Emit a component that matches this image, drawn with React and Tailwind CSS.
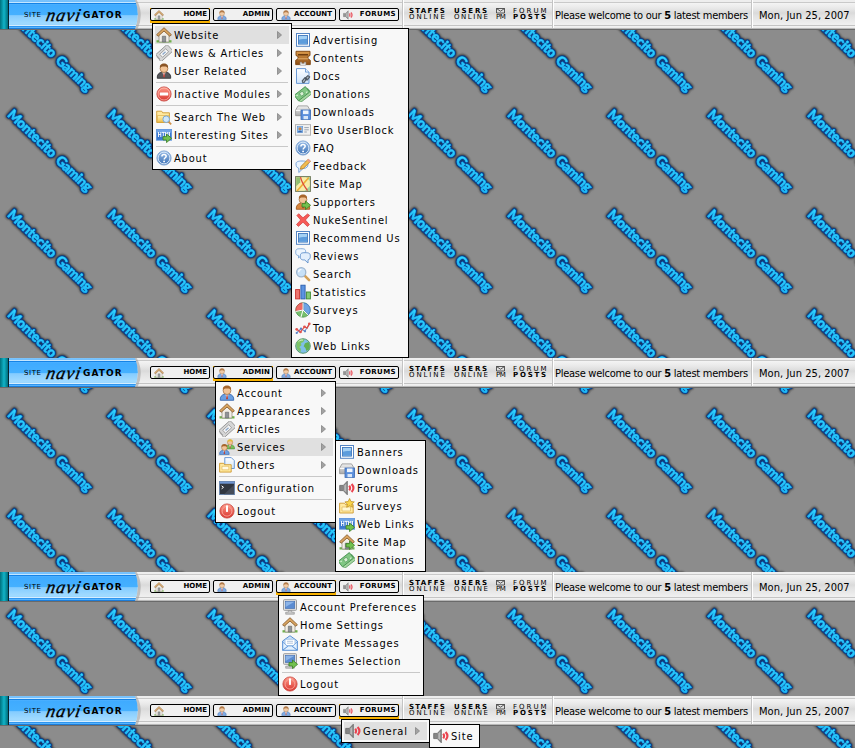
import React from "react";

const svgProps = { viewBox: "0 0 16 16", width: 16, height: 16 };

/* Gradients shared by every icon on the page */
function SharedDefs() {
  const stops = [
    ["gRed", "#ff9d8c", "#d8322c"],
    ["gYellow", "#fff3b8", "#f3c24c"],
    ["gGrey", "#f1f1f1", "#a9a9a9"],
    ["gHelp", "#9cc0ea", "#3a6fb4"],
    ["gPaper", "#ffffff", "#cfe3fa"],
    ["gBrown", "#dc9c4c", "#8c4d14"],
    ["gText", "#3fe2ff", "#14b0fa"],
  ];
  return (
    <svg width="0" height="0" className="absolute">
      <defs>
        {stops.map(([id, a, b]) => (
          <linearGradient key={id} id={id} x1="0" y1="0" x2="0" y2="1">
            <stop offset="0" stopColor={a} />
            <stop offset="1" stopColor={b} />
          </linearGradient>
        ))}
      </defs>
    </svg>
  );
}

const GoArrow = () => (
  <path d="M7 9.600h3.500V7l5.100 4.300-5.100 4.300v-2.600H7z" fill="#72c14e" stroke="#3b7d22" strokeWidth=".8" />
);
const Monitor = () => (
  <>
    <rect x="1.5" y=".7" width="13" height="10.6" rx=".8" fill="#e4e4e4" stroke="#9a9a9a" />
    <rect x="3.3" y="2.4" width="9.4" height="7" fill="#5b8cd2" stroke="#456fae" strokeWidth=".7" />
    <path d="M3.6 2.7h8.8L3.6 8z" fill="#8cb4e8" />
    <path d="M6.3 11.5h3.4v1.7h2.6v2H3.7v-2h2.6z" fill="#c9c9c9" stroke="#8a8a8a" strokeWidth=".6" />
  </>
);
const HouseShape = () => (
  <>
    <path d="M.5 13.2h15v2.3H.5z" fill="#6fb14b" />
    <path d="M3 8l5-4.8L13 8v7H3z" fill="#f2eee6" stroke="#8d8679" strokeWidth=".7" />
    <path d="M6.3 9.2h3.4V15H6.3z" fill="#8f9296" stroke="#56595c" strokeWidth=".5" />
    <path d="M8 .7L.6 7.7l1.5 1.6L8 4l5.9 5.3 1.5-1.6z" fill="#d9a560" stroke="#805223" strokeWidth=".8" />
  </>
);
const Person = ({ body = "#6a9fe2", edge = "#2f5fa8", hair = "#a8662c" }) => (
  <>
    <path d="M1.3 15.3c-.5-3.6 1.6-5.6 4.2-6h5c2.6.4 4.7 2.4 4.2 6z" fill={body} stroke={edge} strokeWidth=".8" />
    <path d="M6.4 9.2L8 14l1.6-4.8z" fill="#fff" />
    <path d="M7.6 10h.9l.5 3.6-1 1.2-.9-1.2z" fill="#b8433a" />
    <circle cx="8" cy="5.600" r="3.900" fill="#f2c497" stroke="#9b6433" strokeWidth=".7" />
    <path d="M4 5C3.400 2.200 5.300.5 8 .5s4.600 1.700 4 4.500C11 3.800 9.600 3.500 8 3.600 6.400 3.500 5 3.800 4 5z" fill={hair} />
  </>
);
const FolderShape = () => (
  <>
    <path d="M.7 4.200V2.200h5l1 1.600h6.700v9.700H.7z" fill="#ffe9a0" stroke="#cf9a2f" strokeWidth=".9" />
    <path d="M1.500 6.500h11.600v6.600H1.500z" fill="url(#gYellow)" stroke="#d8a63b" strokeWidth=".6" />
  </>
);

const icons = {
  house: <HouseShape />,
  houseGo: (
    <>
      <HouseShape />
      <GoArrow />
    </>
  ),
  ticket: (
    <g transform="rotate(-42 8 8)">
      <path d="M0 3.700h14.800c1 0 1.300.5 1.300 1.200v6.400c0 .7-.4 1.200-1.300 1.200H0V10l1-.8-1-.9 1-.9-1-.9 1-.8z" fill="#d6d6d6" stroke="#8c8c8c" strokeWidth=".8" />
      <rect x="4" y="6" width="8.200" height="4.200" fill="#f6f6f6" stroke="#979797" strokeWidth=".8" />
      <path d="M6 8.100h4" stroke="#8aa6c8" strokeWidth="1.300" />
    </g>
  ),
  suit: <Person body="#56575b" edge="#2b2c2f" hair="#8a5526" />,
  user: <Person />,
  userGo: (
    <>
      <Person body="#d9863c" edge="#99551a" />
      <GoArrow />
    </>
  ),
  group: (
    <>
      <g transform="translate(5.800 -.2) scale(.66)">
        <Person body="#78c05c" edge="#3d8528" hair="#e4bb3c" />
      </g>
      <g transform="translate(-.3 4.700) scale(.71)">
        <Person />
      </g>
    </>
  ),
  minus: (
    <>
      <circle cx="8" cy="8" r="7.100" fill="url(#gRed)" stroke="#c23a34" strokeWidth=".8" />
      <circle cx="8" cy="8" r="6" fill="none" stroke="#ffc3b8" strokeWidth=".7" />
      <rect x="3.800" y="6.600" width="8.400" height="2.800" rx=".5" fill="#fff" />
    </>
  ),
  folderSearch: (
    <>
      <FolderShape />
      <path d="M12.200 12.300l3 3" stroke="#d0914a" strokeWidth="1.800" />
      <circle cx="10.200" cy="10.200" r="3.300" fill="#cfe8fb" stroke="#7ca6cf" />
    </>
  ),
  folderPage: (
    <>
      <path d="M5.800.6h6.500l3 3v7.900H5.800z" fill="url(#gPaper)" stroke="#5b8fd0" strokeWidth=".9" />
      <path d="M.6 6.300h4l1 1.400h6.600v7.400H.6z" fill="#ffe9a0" stroke="#cf9a2f" strokeWidth=".9" />
      <path d="M3 9.300h6.800v3.500H3z" fill="#fffbe6" stroke="#dcb04c" strokeWidth=".6" />
    </>
  ),
  folderStar: (
    <>
      <path d="M.6 5.200h5l1 1.500h7.600v8.300H.6z" fill="#ffe9a0" stroke="#cf9a2f" strokeWidth=".9" />
      <path d="M3 9h8.500v4H3z" fill="#fff7d2" stroke="#dcb04c" strokeWidth=".6" />
      <path d="M10.600.5l1.400 3 3.300.4-2.500 2.200.7 3.200-2.900-1.600-2.900 1.600.7-3.200L5.900 3.900l3.300-.4z" fill="#f9d44a" stroke="#b98a1d" strokeWidth=".7" />
    </>
  ),
  html: (
    <>
      <rect x=".4" y="2.400" width="15.200" height="10.800" fill="#3b78cf" stroke="#5d94de" strokeWidth=".8" />
      <path d="M.8 2.800h14.400v3H.8z" fill="#6fa3e6" />
      <path d="M2.500 5v5M4.800 5v5M2.500 7.500h2.300M5.800 5.400h3M7.300 5.400V10M9.500 10V5.200l1.200 2 1.200-2V8M13.500 5v4" stroke="#fff" strokeWidth=".9" fill="none" />
      <GoArrow />
    </>
  ),
  help: (
    <>
      <circle cx="8" cy="8" r="7.100" fill="url(#gHelp)" stroke="#7ea4d4" strokeWidth=".9" />
      <circle cx="8" cy="8" r="5.900" fill="none" stroke="#dce9f8" strokeWidth="1" />
      <path d="M5.900 6.500c0-1.400.9-2.100 2.100-2.100s2.200.7 2.200 1.900c0 1.400-2 1.500-2 3.100" fill="none" stroke="#fff" strokeWidth="1.500" />
      <circle cx="8.100" cy="11.400" r=".95" fill="#fff" />
    </>
  ),
  picture: (
    <>
      <rect x="1.500" y="1.500" width="13" height="12.800" fill="#fff" stroke="#5585c4" />
      <rect x="3.500" y="3.500" width="9" height="8.600" fill="#a3d0f4" stroke="#4178bc" strokeWidth=".9" />
      <path d="M4 7.800c3-1.200 5-.5 8-1V11.700H4z" fill="#5c9cdc" />
    </>
  ),
  contents: (
    <>
      <path d="M1 1.300h14v4.200l-2 1v2.300l2.300 1.500v4.300H.7v-4.300L3 8.800V6.500l-2-1z" fill="url(#gBrown)" stroke="#7c4410" strokeWidth=".9" />
      <path d="M3 4h10v1.500H3z" fill="#6e3c0e" />
      <path d="M3 8.800h10" stroke="#f1bf7c" strokeWidth=".8" />
      <path d="M5.200 12.200h1.500v1.200h2.600v-1.200h1.500v2.900H5.200z" fill="#fff" stroke="#8f8f8f" strokeWidth=".6" />
    </>
  ),
  docs: (
    <>
      <path d="M1.500.6h9l3.500 3.500v11.300H1.500z" fill="url(#gPaper)" stroke="#5b8fd0" strokeWidth=".9" />
      <path d="M10.500.6v3.500H14" fill="#e5f0fd" stroke="#5b8fd0" strokeWidth=".8" />
      <path d="M7.800 14.700l-.6-1.800 2.800-3.300 1.700 1.200-2.600 3.700zM10.800 12l-.4-2 2.500-2.400 1.800 1.300-2.300 3z" stroke="#4c5661" strokeWidth="1.100" fill="#aab4be" strokeLinejoin="round" />
    </>
  ),
  cash: (
    <g transform="rotate(-38 8 8)">
      <rect x="1" y="6.600" width="14.200" height="6.600" fill="#a6d6a0" stroke="#4c9455" strokeWidth=".7" />
      <rect x=".2" y="3.600" width="14.200" height="7" fill="#82c784" stroke="#3f8b49" strokeWidth=".8" />
      <circle cx="7.300" cy="7.100" r="2.100" fill="#d7f0d2" stroke="#4c9455" strokeWidth=".7" />
      <path d="M1.700 5.500h1.600M11.300 8.800h1.600" stroke="#e7f8e3" strokeWidth="1" />
    </g>
  ),
  drive: (
    <>
      <path d="M3 1.900h9.500l2.700 4.300v5.500H.6V6.200z" fill="url(#gGrey)" stroke="#8f8f8f" strokeWidth=".8" />
      <path d="M.8 6.400h14.200" stroke="#fff" />
      <rect x="6" y="6" width="9.500" height="9.500" fill="#5c90dc" stroke="#3c6cb4" strokeWidth=".8" />
      <rect x="8" y="6.500" width="5.500" height="3.600" fill="#eef5fd" />
      <rect x="8.500" y="12" width="4.500" height="3.200" fill="#d9e7f8" />
    </>
  ),
  vcard: (
    <>
      <rect x=".5" y="2.600" width="15" height="10.600" fill="#f1f1f1" stroke="#b4b4b4" />
      <rect x="2.300" y="4.500" width="5.400" height="6" fill="#8ebcec" stroke="#5b8fd0" strokeWidth=".6" />
      <circle cx="5" cy="6.700" r="1.500" fill="#c98142" />
      <path d="M2.700 10.200c.4-2 4.200-2 4.600 0z" fill="#3766ae" />
      <path d="M9.300 5.600h4.500M9.300 7.800h4.500M9.300 10h2.500" stroke="#8e9aa8" strokeWidth=".9" />
    </>
  ),
  feedback: (
    <>
      <path d="M1 5.800c0-2 2-2.800 6-2.800s6 .8 6 3.300-1.500 4.200-5 4.200l-4.200 4V10.300C1.800 9.700 1 8.300 1 5.800z" fill="#eaf4fe" stroke="#6a9ad6" strokeWidth=".9" />
      <path d="M5.300 11.300l.9-3.100 7-7 2.300 2.100-7.100 7.100z" fill="#f3bd52" stroke="#b07a22" strokeWidth=".8" />
      <path d="M12.100 2.300l1.300-1.500 2.300 2.100-1.300 1.500z" fill="#ea9b92" />
    </>
  ),
  map: (
    <>
      <rect x=".6" y=".6" width="14.800" height="14.800" fill="#f7eda8" stroke="#6e7a5c" />
      <path d="M1.200 1.200h4v5l-4 4z" fill="#8fbf6f" />
      <path d="M9.500 15L15 10v5zM11 1.200h4V5z" fill="#a3cf9c" />
      <path d="M2 15L13.800 1.500" stroke="#f0ae35" strokeWidth="1.700" />
      <path d="M5.500 1.200c1 5 3 8 7 13.500" fill="none" stroke="#dd4b3b" strokeWidth="1.300" />
    </>
  ),
  cross: (
    <path d="M3.700 1.700L8 5.800l4.600-3.900 2 1.500L10.400 8l4 4.600-1.900 1.900L8 10.200l-4.600 4.200-1.900-1.900L5.700 8 1.900 3.500z" fill="#f65a56" stroke="#d03a3a" strokeWidth=".7" />
  ),
  comments: (
    <>
      <path d="M.7 4.200c0-3 1-3.500 5-3.500s5 .5 5 3.500-1.200 3.600-4.700 3.600L3.500 10V7.600C1.500 7.300.7 6.600.7 4.200z" fill="#eef6fe" stroke="#7ba5d8" strokeWidth=".9" />
      <path d="M5.300 8.300c0-3 1-3.600 5-3.600s5 .6 5 3.600c0 2.400-.8 3.200-2.300 3.500V15l-3.200-3c-3.500 0-4.500-.7-4.500-3.700z" fill="#e3effc" stroke="#5f8fc9" strokeWidth=".9" />
    </>
  ),
  magnifier: (
    <>
      <path d="M9.600 9.600l4.500 4.500" stroke="#d4a056" strokeWidth="2.600" strokeLinecap="round" />
      <circle cx="6.200" cy="6.200" r="4.600" fill="#c7e1f8" stroke="#9fb6cf" strokeWidth="1.300" />
      <path d="M3.600 6.200a2.800 2.800 0 0 1 2.800-2.700" stroke="#fff" strokeWidth="1.200" fill="none" />
    </>
  ),
  bars: (
    <>
      <rect x=".6" y="5.600" width="4" height="9.300" fill="#ee7670" stroke="#c8312c" strokeWidth=".9" />
      <rect x="5.900" y="1.200" width="4.200" height="13.700" fill="#5b93e0" stroke="#2a5dad" strokeWidth=".9" />
      <rect x="11.400" y="8" width="4" height="6.900" fill="#84c974" stroke="#3f8b34" strokeWidth=".9" />
    </>
  ),
  pie: (
    <>
      <circle cx="8" cy="8" r="7.200" fill="#75be6d" stroke="#3d8c3d" strokeWidth=".7" />
      <path d="M8 8L7.400.8A7.200 7.200 0 0 0 .9 9z" fill="#ee6a65" stroke="#b93b38" strokeWidth=".6" />
      <path d="M8.600 8V.8a7.200 7.200 0 0 1 4.900 11.900z" fill="#6ea4e4" stroke="#3f73bb" strokeWidth=".7" />
      <path d="M8 .8V8L.9 9.400M8 8l5.200 5M8 8L6 15" stroke="#fff" strokeWidth="1" fill="none" />
    </>
  ),
  line: (
    <>
      <path d="M1.600 13L6 8.800l3.800 2.500L14.300 4" fill="none" stroke="#6a92cf" strokeWidth="1.100" />
      <path d="M1.600 9.300L5.500 12l4-5.300 2.600 1.400L14.300 4" fill="none" stroke="#dd4943" strokeWidth="1.200" />
      {[[1.7, 9.3], [5.5, 12], [9.5, 6.8], [14.3, 3.8]].map(([x, y]) => (
        <circle key={x} cx={x} cy={y} r="1.350" fill="#e3534d" />
      ))}
      {[[1.7, 13], [6, 8.6], [10, 11.3]].map(([x, y]) => (
        <circle key={x} cx={x} cy={y} r="1.100" fill="#5881c4" />
      ))}
    </>
  ),
  globe: (
    <>
      <circle cx="8" cy="8" r="7.300" fill="#7fbfe8" stroke="#4f8f62" strokeWidth=".9" />
      <path d="M2 4C4 1 8 .6 9.500 1.600L8.300 4 6 5l.4 2.400L4.200 9l1.700 1.700-.3 3.600C2.500 12.700.3 9.500 2 4z" fill="#7cc467" />
      <path d="M10 5.300l3.300-1.400C15 6 15.400 9 14 11.500L11.400 13l-1-3L8.700 8.300z" fill="#62b052" />
      <path d="M3.500 3.700C5 2 7 1.800 8 2.200" stroke="#d8f2cb" fill="none" />
    </>
  ),
  terminal: (
    <>
      <rect x=".4" y="1.400" width="15.200" height="13.200" fill="#303640" stroke="#6888b5" strokeWidth=".8" />
      <rect x=".8" y="1.700" width="14.400" height="2" fill="#6e95d2" />
      <path d="M2.600 5.800l1.900 1.500-1.900 1.500" stroke="#fff" fill="none" />
      <path d="M15 5L5 14.200h10z" fill="#454c58" />
    </>
  ),
  power: (
    <>
      <circle cx="8" cy="8" r="7.100" fill="url(#gRed)" stroke="#c8433b" strokeWidth=".8" />
      <circle cx="8" cy="8.200" r="4.900" fill="none" stroke="#f9a79c" strokeWidth=".9" />
      <rect x="7" y="2.300" width="2" height="6.600" rx=".6" fill="#fff" />
    </>
  ),
  sound: (
    <>
      <path d="M.7 5.400h3.600l4-4.200v13.600l-4-4.200H.7z" fill="#858585" stroke="#666" strokeWidth=".8" />
      <path d="M5.300 5.500l2-2v9l-2-2z" fill="#b9b9b9" />
      <path d="M10.200 5.600c1.100 1.500 1.100 3.300 0 4.800M12.600 4c2.300 2.500 2.300 5.500 0 8" stroke="#ea4450" strokeWidth="2.100" fill="none" />
    </>
  ),
  computer: <Monitor />,
  computerGo: (
    <>
      <Monitor />
      <GoArrow />
    </>
  ),
  mail: (
    <>
      <path d="M.6 6L8 .7 15.400 6v9.300H.6z" fill="#cfe4fb" stroke="#4a86cf" strokeWidth=".9" />
      <path d="M3 4.200h10v6.500H3z" fill="#fff" stroke="#7eaadf" strokeWidth=".7" />
      <path d="M5 6.300h6M5 8.200h6" stroke="#9fb8d6" strokeWidth=".8" />
      <path d="M.8 7l5 4.500L.8 15zM15.200 7l-5 4.500 5 3.500zM.8 15.200L6 11h4l5.200 4.200z" fill="#e4f1fe" stroke="#5f95d8" strokeWidth=".7" />
    </>
  ),
};

function Icon({ name }) {
  return (
    <svg {...svgProps} className="block shrink-0">
      {icons[name]}
    </svg>
  );
}

function Row({ icon, label, arrow, active }) {
  return (
    <div className={`flex h-[18px] items-center gap-[2px] pl-px pr-[7px] ${active ? "bg-[#e0e0e0]" : ""}`}>
      <Icon name={icon} />
      <span className="flex-1 whitespace-nowrap pt-[2px] text-[11px] leading-[18px] tracking-[0.83px] text-black">{label}</span>
      {arrow && (
        <svg width="5" height="8" viewBox="0 0 5 8" className="block shrink-0">
          <path d="M.5.500L4.500 4l-4 3.500z" fill="#a2a2a2" stroke="#858585" strokeWidth=".8" />
        </svg>
      )}
    </div>
  );
}

function Menu({ items, className, children }) {
  return (
    <div className={`absolute z-10 border border-black bg-[#f8f8f8] p-[2px] ${className}`}>
      {items.map((it, i) =>
        it === "-" ? (
          <div key={i} className="mx-px h-[5px] pt-[2px]">
            <div className="h-px bg-[#c8c8c8]" />
          </div>
        ) : (
          <Row key={i} icon={it[0]} label={it[1]} arrow={it[2]} active={it[3]} />
        )
      )}
      {children}
    </div>
  );
}

const homeMenu = [
  ["house", "Website", true, true],
  ["ticket", "News & Articles", true],
  ["suit", "User Related", true],
  "-",
  ["minus", "Inactive Modules", true],
  "-",
  ["folderSearch", "Search The Web", true],
  ["html", "Interesting Sites", true],
  "-",
  ["help", "About"],
];
const websiteMenu = [
  ["picture", "Advertising"],
  ["contents", "Contents"],
  ["docs", "Docs"],
  ["cash", "Donations"],
  ["drive", "Downloads"],
  ["vcard", "Evo UserBlock"],
  ["help", "FAQ"],
  ["feedback", "Feedback"],
  ["map", "Site Map"],
  ["userGo", "Supporters"],
  ["cross", "NukeSentinel"],
  ["picture", "Recommend Us"],
  ["comments", "Reviews"],
  ["magnifier", "Search"],
  ["bars", "Statistics"],
  ["pie", "Surveys"],
  ["line", "Top"],
  ["globe", "Web Links"],
];
const adminMenu = [
  ["user", "Account", true],
  ["house", "Appearances", true],
  ["ticket", "Articles", true],
  ["group", "Services", true, true],
  ["folderPage", "Others", true],
  "-",
  ["terminal", "Configuration"],
  "-",
  ["power", "Logout"],
];
const servicesMenu = [
  ["picture", "Banners"],
  ["drive", "Downloads"],
  ["sound", "Forums"],
  ["folderStar", "Surveys"],
  ["html", "Web Links"],
  ["houseGo", "Site Map"],
  ["cash", "Donations"],
];
const accountMenu = [
  ["computer", "Account Preferences"],
  ["house", "Home Settings"],
  ["mail", "Private Messages"],
  ["computerGo", "Themes Selection"],
  "-",
  ["power", "Logout"],
];

/* Wide face for the small capital labels of the bar */
const wide = "font-['DejaVu_Sans',sans-serif] [font-stretch:normal]";

const navItems = [
  { id: "home", label: "HOME", icon: "house", iconClass: "ml-[3px]", track: "tracking-[0px] pr-[2px]" },
  { id: "admin", label: "ADMIN", icon: "user", iconClass: "ml-[3px]", track: "tracking-[0.1px] pr-[2px]" },
  { id: "account", label: "ACCOUNT", icon: "user", iconClass: "ml-[4px]", track: "tracking-[0px] pr-[3px]" },
  { id: "forums", label: "FORUMS", icon: "sound", iconClass: "ml-[3px]", track: "tracking-[0.4px] pr-[2px]" },
];

function NavButton({ item, active, children }) {
  return (
    <div className={`relative h-[15px] w-[60px] ${active ? "bg-[#f7b100]" : ""}`}>
      <div className="flex h-[13px] items-center justify-between rounded-[2px] border border-black bg-[#f0f0f0]">
        <svg viewBox="0 0 16 16" width="10" height="10" className={`block shrink-0 opacity-85 ${item.iconClass}`}>
          {icons[item.icon]}
        </svg>
        <span className={`whitespace-nowrap text-[7px] font-bold leading-[11px] text-black ${wide} ${item.track}`}>{item.label}</span>
      </div>
      {children}
    </div>
  );
}

function Brand() {
  return (
    <div className="flex h-[30px] w-[150px] shrink-0">
      <div className="h-[29px] w-[8px] bg-linear-to-r from-[#00707e] via-[#12b4c8] to-[#006d7c]" />
      <div className="h-[29px] w-px bg-[#06242c]" />
      <div className="relative h-[29px] w-[131px]">
        <svg width="134" height="29" className="absolute left-0 top-0 block">
          <defs>
            <linearGradient id="brandFill" x1="0" y1="0" x2="0" y2="1">
              <stop offset="0" stopColor="#7cc4fb" />
              <stop offset=".1" stopColor="#6cbcff" />
              <stop offset=".17" stopColor="#3fabff" />
              <stop offset=".5" stopColor="#45b0ff" />
              <stop offset=".54" stopColor="#84ccff" />
              <stop offset=".8" stopColor="#a0daff" />
              <stop offset="1" stopColor="#8dcfff" />
            </linearGradient>
            <clipPath id="brandEdge">
              <path d="M0 0h126q5.500 14 0 29H0z" />
            </clipPath>
          </defs>
          <path d="M126 0q8 14 1 29" fill="none" stroke="#9d9d9d" strokeWidth="3" opacity=".55" />
          <g clipPath="url(#brandEdge)">
            <rect width="134" height="29" fill="url(#brandFill)" />
            <rect y="2" width="134" height="1" fill="#c4e6ff" />
            <rect y="3" width="134" height="1" fill="#1583e6" />
            <rect y="25" width="134" height="1" fill="#d5eeff" />
            <rect y="26" width="134" height="1" fill="#2f95ee" />
            <rect y="27" width="134" height="1" fill="#55b4ff" />
            <rect y="28" width="134" height="1" fill="#1c7cd8" />
          </g>
        </svg>
        <div className="relative flex h-[29px] items-center whitespace-nowrap pl-[15px] text-black">
          <span className={`w-[21px] pt-[1px] text-[7px] leading-[10px] tracking-[0.6px] ${wide}`}>SITE</span>
          <span className="w-[38px] -skew-x-12 text-center font-['Liberation_Serif',serif] text-[18px] italic leading-[16px] tracking-[1px] [-webkit-text-stroke:0.3px_#000]">
            navi
          </span>
          <span className={`text-[9px] font-bold leading-[12px] tracking-[1.1px] ${wide}`}>GATOR</span>
        </div>
      </div>
    </div>
  );
}

function Divider() {
  return (
    <div className="flex h-[28px]">
      <div className="w-px bg-[#c4c4c4]" />
      <div className="w-px bg-white" />
    </div>
  );
}

function Stack({ top, bottom, width, topClass, bottomClass }) {
  return (
    <div className={`flex flex-col whitespace-nowrap text-black ${width} ${wide}`}>
      <span className={`text-[7px] leading-[6px] ${topClass}`}>{top}</span>
      <span className={`text-[7px] leading-[6px] ${bottomClass}`}>{bottom}</span>
    </div>
  );
}

function NavBar({ active, children }) {
  return (
    <div className="relative flex h-[30px] border-b border-[#6a6a6a] bg-[linear-gradient(to_bottom,#eeeeee_0px,#eeeeee_2px,#c9c9c9_2px,#c9c9c9_3px,#f4f4f4_3px,#e9e9e9_8px,#dadada_13px,#e2e2e2_16px,#f0f0f0_25px,#c4c4c4_25px,#c4c4c4_26px,#f4f4f4_26px,#e8e8e8_28px,#b8b8b8_28px)]">
      <Brand />
      <div className="flex gap-[3px] pt-[8px]">
        {navItems.map((item) => (
          <NavButton key={item.id} item={item} active={item.id === active}>
            {item.id === active && children}
          </NavButton>
        ))}
      </div>
      <div className="ml-[3px]">
        <Divider />
      </div>
      <div className="flex w-[148px] pl-[5px] pt-[8px]">
        <Stack top="STAFFS" bottom="ONLINE" width="w-[45px]" topClass="font-bold tracking-[1.3px]" bottomClass="tracking-[1.9px]" />
        <Stack top="USERS" bottom="ONLINE" width="w-[42px]" topClass="font-bold tracking-[1.8px]" bottomClass="tracking-[1.5px]" />
        <div className="flex w-[17px] flex-col">
          <svg width="9" height="6" viewBox="0 0 9 6" className="block">
            <path d="M.5.500h8v4.500h-8zM.5.500l4 2.700 4-2.700" fill="none" stroke="#333" strokeWidth=".8" />
          </svg>
          <span className={`text-[7px] leading-[6px] tracking-[-0.4px] ${wide}`}>PM</span>
        </div>
        <Stack top="FORUM" bottom="POSTS" width="w-[36px]" topClass="tracking-[2px]" bottomClass="font-bold tracking-[1.8px]" />
      </div>
      <Divider />
      <span className="w-[197px] whitespace-nowrap pl-[1px] pt-[2px] text-[11px] leading-[28px] tracking-[-0.27px] text-black">
        Please welcome to our <b>5</b> latest members
      </span>
      <Divider />
      <span className="whitespace-nowrap pl-[6px] pt-[2px] text-[11px] leading-[28px] tracking-[0.05px] text-black">
        Mon, Jun 25, 2007
      </span>
    </div>
  );
}

/* One word of the wallpaper: soft shadow, navy outline, cyan face */
function WallWord({ x, length, children }) {
  return (
    <>
      <text x={x} y="4" textLength={length} stroke="#2a2a2a" strokeWidth="4" strokeLinejoin="round" filter="url(#glow)">
        {children}
      </text>
      <text x={x} y="4" textLength={length} stroke="#0b3f8c" strokeWidth="3" strokeLinejoin="round">
        {children}
      </text>
      <text x={x} y="4" textLength={length} fill="url(#gText)" stroke="#1fc4fd" strokeWidth=".6">
        {children}
      </text>
    </>
  );
}

function Wallpaper() {
  return (
    <svg width="855" height="748" className="absolute left-0 top-0 block">
      <defs>
        <filter id="glow" x="-20%" y="-60%" width="140%" height="220%">
          <feGaussianBlur stdDeviation="1" />
        </filter>
        <pattern id="tile" width="100" height="100" patternUnits="userSpaceOnUse">
          <g transform="translate(9.500 12.500) rotate(43.800)" fontFamily="Lato, sans-serif" fontWeight="900" fontSize="13.500">
            <WallWord x="0" length="62">Montecito</WallWord>
            <WallWord x="66.500" length="44.500">Gaming</WallWord>
          </g>
        </pattern>
      </defs>
      <rect width="855" height="748" fill="#8c8c8c" />
      <rect width="855" height="748" fill="url(#tile)" />
    </svg>
  );
}

export default function App() {
  return (
    <div className="relative h-[748px] w-[855px] overflow-hidden bg-[#8c8c8c] font-['DejaVu_Sans_Condensed','DejaVu_Sans',sans-serif] [font-stretch:condensed]">
      <SharedDefs />
      <Wallpaper />
      <section className="relative h-[358px]">
        <NavBar active="home">
          <Menu items={homeMenu} className="left-[2px] top-[15px] w-[140px]">
            <Menu items={websiteMenu} className="left-[138px] top-[4px] w-[118px]" />
          </Menu>
        </NavBar>
      </section>
      <section className="relative h-[214px]">
        <NavBar active="admin">
          <Menu items={adminMenu} className="left-[2px] top-[15px] w-[121px]">
            <Menu items={servicesMenu} className="left-[119px] top-[58px] w-[91px]" />
          </Menu>
        </NavBar>
      </section>
      <section className="relative h-[124px]">
        <NavBar active="account">
          <Menu items={accountMenu} className="left-[2px] top-[15px] w-[146px]" />
        </NavBar>
      </section>
      <section className="relative h-[52px]">
        <NavBar active="forums">
          <Menu items={[["sound", "General", true, true]]} className="left-[2px] top-[15px] w-[89px]">
            <Menu items={[["sound", "Site"]]} className="left-[87px] top-[4px] w-[51px]" />
          </Menu>
        </NavBar>
      </section>
    </div>
  );
}
